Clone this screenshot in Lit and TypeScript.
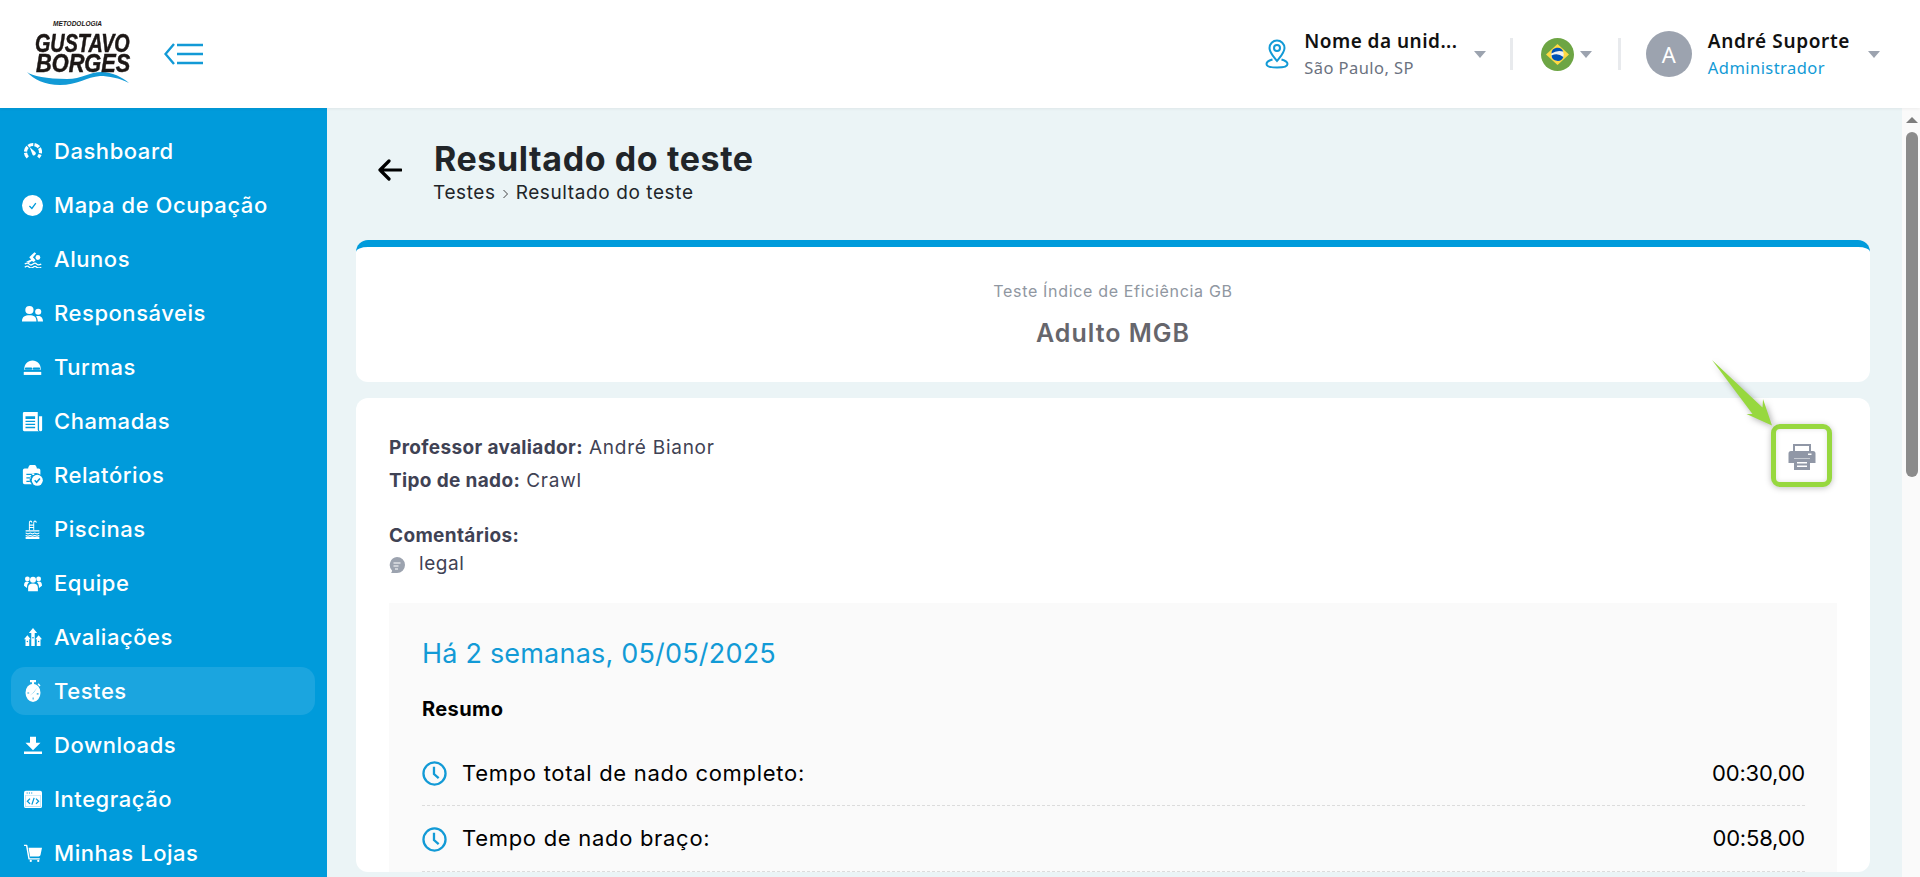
import { LitElement, html, css, svg } from "lit";
import { customElement } from "lit/decorators.js";

const B = "#009bdb";
const menu: [string, unknown, string][] = [
  ["Dashboard", svg`<path d="M5 20.500A10 10 0 1 1 19 20.500" fill="none" stroke="#fff" stroke-width="4.200" stroke-dasharray="6.800 1.500"/><path d="M7.500 6.500l7.800 7.200a2.600 2.600 0 0 1-3.800 3.500z"/>`, "sm"],
  ["Mapa de Ocupação", svg`<circle cx="12" cy="12" r="12"/><path d="M8.500 12.500l2.800 2.800 4.500-6" fill="none" stroke="${B}" stroke-width="1.500"/>`, ""],
  ["Alunos", svg`<circle cx="18.500" cy="10" r="3.200"/><path d="M3 15.500l6.500-3-2.500-3 7-6.500 2.200 1.800-4.300 4.700 3.600 4-2.500 2.500-2.500-1.300-4 2.500z"/><path d="M1 18.800c2.800-2 4.500-2 6 0 1.500 1.700 3 1.700 5 0 2-1.700 3.500-1.700 5 0 1.500 1.700 3.200 1.200 6 0M1 23c2.800-2 4.500-2 6 0 1.500 1.400 3 1.400 5 0 2-1.700 3.500-1.700 5 0 1.500 1.400 3.200 1 6 0" fill="none" stroke="#fff" stroke-width="1.700"/>`, "sm"],
  ["Responsáveis", svg`<circle cx="8.500" cy="8" r="4.700"/><circle cx="18.500" cy="10" r="3.500"/><path d="M0 21c0-5.500 3.500-7 8.500-7s8 1.500 8 7zM18 21c0-2.500-.6-4.300-2-5.700 4-1.500 8 .5 8 5.700z"/>`, ""],
  ["Turmas", svg`<path d="M2.500 14.500C2.500 8 6.500 4 12 4s9.500 4 9.500 10.500z"/><path d="M2 17h20v3.500H2z"/><path d="M4.500 13.300h6M13.500 13.300h6" stroke="${B}" stroke-width="2.600" stroke-linecap="round"/>`, ""],
  ["Chamadas", svg`<path fill-rule="evenodd" d="M1 2.500A1.500 1.500 0 0 1 2.500 1H18v20.500a1.500 1.500 0 0 0 1.500 1.500h-17A1.500 1.500 0 0 1 1 21.500zM4 6v3h11V6zm0 5v1.600h11V11zm0 3.500v1.600h11v-1.600zm0 3.500v1.600h11V18z"/><path d="M19.500 6H23v15.500a1.700 1.700 0 0 1-3.500 0z"/>`, ""],
  ["Relatórios", svg`<path fill-rule="evenodd" d="M3 4h4a5 5 0 0 1 10 0h2a2 2 0 0 1 2 2v5a7 7 0 0 0-9.800 11H3a2 2 0 0 1-2-2V6a2 2 0 0 1 2-2zm2 6v1.500h9V10zm0 4v1.500h5V14zm0 4v1.500h4V18z"/><circle cx="17.500" cy="17.500" r="6.300"/><path d="M14.500 17.500l2.200 2.200 3.800-4.200" fill="none" stroke="${B}" stroke-width="1.800"/>`, ""],
  ["Piscinas", svg`<path d="M7 13V3.500a2 2 0 0 1 4 0M14 13V3.500a2 2 0 0 1 4 0M7 6.500h7M7 9.500h7" fill="none" stroke="#fff" stroke-width="1.500"/><path d="M1 13h22v1.500H1zM1 21h22v3H1z"/><path d="M1 16.500c2 0 2 1 3.700 1s1.800-1 3.700-1 1.800 1 3.600 1 1.800-1 3.600-1 1.800 1 3.700 1 1.700-1 3.700-1M1 19.500c2 0 2 1 3.700 1s1.800-1 3.700-1 1.800 1 3.600 1 1.800-1 3.600-1 1.800 1 3.700 1 1.700-1 3.700-1" fill="none" stroke="#fff" stroke-width="1.400"/>`, "pool"],
  ["Equipe", svg`<circle cx="12" cy="7.500" r="4"/><circle cx="4.500" cy="6.500" r="3.200"/><circle cx="19.500" cy="6.500" r="3.200"/><path d="M5.500 23v-5c0-4 2.500-5.500 6.500-5.500s6.500 1.500 6.500 5.500v5zM0 15.500c0-3.500 1.500-5.500 4-5.500 1.200 0 2 .3 2.700 1C5 12.500 4 14.500 4 18.500zM24 15.500c0-3.500-1.500-5.500-4-5.500-1.200 0-2 .3-2.700 1 1.700 1.500 2.700 3.500 2.700 7.500z"/>`, "sm"],
  ["Avaliações", svg`<path d="M12 0l5.500 6.500h-3.200V24H9.700V6.500H6.500z"/><path d="M4.500 9.500L9 15H7v9H2v-9H0zM19.500 9.500L24 15h-2v9h-5v-9h-2z"/><circle cx="12" cy="13" r="1.100" fill="${B}"/><circle cx="4.500" cy="18" r="1" fill="${B}"/><circle cx="19.500" cy="18" r="1" fill="${B}"/>`, "sm"],
  ["Testes", svg`<path d="M8 0h8v2.400h-2.600v2.600h-2.800V2.400H8z"/><path fill-rule="evenodd" d="M12 4a10 10 0 1 1 0 20 10 10 0 0 1 0-20zm6 3.800l-5.500 5.700-5 3.700 5.600-3.500zM4.500 13.500v1.300h2.400v-1.300zm12.500 1v1.300h2.400v-1.300zm-5.500 4.500v2.200h1.300V19z"/><path d="M19.500 3.500l2.500 2.400-1.300 1.300-2.500-2.400z"/>`, "tall"],
  ["Downloads", svg`<path d="M8 1h8v8h6L12 19 2 9h6zM0 20.500h24V24H0z"/>`, "sm"],
  ["Integração", svg`<path fill-rule="evenodd" d="M2.500 1h19A2.500 2.500 0 0 1 24 3.500v18a2.500 2.500 0 0 1-2.500 2.500h-19A2.500 2.500 0 0 1 0 21.500v-18A2.500 2.500 0 0 1 2.500 1zM1.800 7v15.200h20.400V7zM3.500 3.300v1.500H5V3.300zm3 0v1.500H8V3.300zm3 0v1.500H11V3.300z"/><path d="M1.800 7h20.400v15.200H1.800z"/><path d="M8 11.500l-3.500 3.500 3.500 3.500M16 11.500l3.500 3.500-3.500 3.500M13.500 10.500l-3 9" fill="none" stroke="${B}" stroke-width="1.700"/>`, "sm"],
  ["Minhas Lojas", svg`<path d="M0 1h3.500a1 1 0 0 1 1 .8L7.600 19H21v1.800H6.800a1 1 0 0 1-1-.8L2.700 2.800H0z"/><path d="M6 5h18l-2 9.500a2.500 2.500 0 0 1-2.400 2H8z"/><circle cx="9" cy="22.500" r="1.500"/><circle cx="19" cy="22.500" r="1.500"/>`, "sm"],
];

const clock = html`<svg class="clock" viewBox="0 0 24 24"><circle cx="12" cy="12" r="10.600" fill="none" stroke="#129ad6" stroke-width="2.200"/><path d="M11.500 5.500v7l4.500 4" fill="none" stroke="#129ad6" stroke-width="2.200"/></svg>`;

@customElement("app-root")
export class AppRoot extends LitElement {
  static styles = css`
    :host { display: flex; flex-direction: column; height: 877px; overflow: hidden; font-family: "Inter", "Liberation Sans", sans-serif; background: #fff; }
    .top { flex: none; height: 108px; display: flex; align-items: center; background: #fff; position: relative; z-index: 2; box-shadow: 0 1px 3px rgba(0,0,0,.06); }
    .logo { width: 106px; height: 70px; margin: 0 0 0 27px; position: relative; font-family: "Liberation Sans", sans-serif; font-weight: 700; font-style: italic; color: #1c1715; white-space: nowrap; }
    .meto { font-size: 6.500px; line-height: 8px; padding-left: 26px; margin-top: 1px; }
    .lg { font-size: 25px; line-height: 19px; height: 19px; transform-origin: 0 50%; -webkit-text-stroke: .5px #1c1715; width: 106px; }
    .l1 { transform: scaleX(.79); margin: 5.500px 0 0 8px; }
    .l2 { transform: scaleX(.87); margin: 1px 0 0 9px; }
    .wave { position: absolute; left: 0; top: 0; width: 106px; height: 70px; }
    .burger { width: 39px; height: 22px; margin-left: 31px; }
    .spacer { flex: 1; }
    .top-text { font-family: "Noto Sans", sans-serif; display: flex; flex-direction: column; gap: 7px; }
    .t1 { font-size: 19px; font-weight: 600; line-height: 20px; color: #111; letter-spacing: .47px; }
    .t1.u { letter-spacing: .63px; }
    .t2 { font-size: 16.500px; line-height: 20px; color: #6b7280; letter-spacing: .45px; }
    .t2.blue { color: #129ad6; }
    .pin { width: 24px; height: 30px; margin-right: 15px; }
    .caret { width: 0; height: 0; border-left: 6.500px solid transparent; border-right: 6.500px solid transparent; border-top: 7px solid #9ca3af; }
    .c1 { margin-left: 16px; }
    .vr { width: 3px; height: 32px; background: #e8eaed; }
    .v1 { margin: 0 28px 0 24px; }
    .flag { width: 33px; height: 33px; margin-top: 1px; }
    .c2 { margin-left: 6px; }
    .v2 { margin: 0 25.300px 0 26px; }
    .avatar { width: 46px; height: 46px; border-radius: 50%; background: #9ca3af; color: #fff; display: flex; align-items: center; justify-content: center; font-size: 22px; font-family: "Noto Sans", sans-serif; margin-right: 16px; }
    .c3 { margin: 0 40px 0 18px; }

    .body { flex: 1; display: flex; min-height: 0; }
    .side { flex: none; width: 327px; background: #009bdb; padding: 19px 12px 0 11px; box-sizing: border-box; overflow: hidden; display: flex; flex-direction: column; gap: 6px; }
    .item { flex: none; height: 48px; border-radius: 14px; display: flex; align-items: center; padding-left: 11px; color: #fff; font-size: 22px; letter-spacing: .55px; font-weight: 500; }
    .item.on { background: #1ba5df; }
    .slot { width: 21px; margin-right: 11px; flex: none; display: flex; justify-content: center; }
    .slot svg { width: 21px; height: 21px; fill: #fff; }
    .slot svg.sm { width: 18px; height: 18px; }
    .slot svg.tall { width: 18px; height: 22px; }
    .slot svg.pool { width: 15px; height: 19px; }

    .main { flex: 1; min-width: 0; background: #ebf4f6; padding: 0 32px 0 29px; overflow: hidden; position: relative; }
    .head { height: 132px; display: flex; align-items: flex-start; box-sizing: border-box; padding-top: 31px; }
    .back { width: 24px; height: 22px; margin: 20px 32px 0 22px; flex: none; }
    .title { font-size: 34px; line-height: 40px; font-weight: 700; color: #212529; letter-spacing: .6px; }
    .crumbs { display: flex; align-items: center; font-size: 19px; line-height: 24px; color: #212529; letter-spacing: .6px; margin: 2px 0 0 -1px; }
    .crumbs svg { width: 8px; height: 10px; margin: 1px 6px 0 6px; }
    .card { background: #fff; border-radius: 12px; }
    .c-top { height: 142px; border-top: 7px solid #009bdb; box-sizing: border-box; text-align: center; padding-top: 34px; }
    .sub { font-size: 16px; line-height: 20px; color: #9097a1; letter-spacing: .67px; }
    .big { font-size: 25px; line-height: 30px; font-weight: 600; color: #66666c; margin-top: 17px; letter-spacing: 1px; }
    .c-main { margin-top: 16px; padding: 33px 33px 0 33px; position: relative; }
    .ln { font-size: 19px; line-height: 33px; color: #3f4254; letter-spacing: .75px; }
    .ln b { font-weight: 700; letter-spacing: .35px; }
    .cm { margin-top: 22px; font-size: 19px; line-height: 33px; font-weight: 700; color: #3f4254; letter-spacing: .35px; }
    .cmt { display: flex; align-items: center; font-size: 19px; line-height: 24px; color: #3f4254; letter-spacing: .57px; }
    .cmt svg { width: 16px; height: 17px; margin: 3px 14px 0 0; }
    .box { margin-top: 27px; background: #fafafa; padding: 31px 32px 0 33px; }
    .date { font-size: 27px; line-height: 40px; color: #129ad6; letter-spacing: .2px; }
    .res { font-size: 20px; line-height: 24px; font-weight: 700; color: #000; margin-top: 23px; letter-spacing: .4px; }
    .rows { margin-top: 19.500px; }
    .row { height: 65.500px; box-sizing: border-box; display: flex; align-items: center; border-bottom: 1px dashed #dcdcdc; font-size: 22px; color: #000; letter-spacing: .7px; }
    .clock { width: 25px; height: 25px; margin: 2px 15px 0 0; flex: none; }
    .row span:last-child { margin-left: auto; letter-spacing: -.2px; }

    .print { position: absolute; top: 26px; right: 38px; width: 61px; height: 63px; box-sizing: border-box; border: 5px solid #97d83f; border-radius: 9px; display: flex; align-items: center; justify-content: center; box-shadow: 0 1px 6px rgba(0,0,0,.25), inset 0 0 5px rgba(0,0,0,.12); background: #fff; }
    .print svg { width: 28px; height: 28px; }
    .arrow { position: absolute; top: 253px; left: 1386px; width: 60px; height: 66px; filter: drop-shadow(2px 2px 3px rgba(0,0,0,.3)); overflow: visible; }

    .sb { flex: none; width: 18px; background: #fafafa; display: flex; flex-direction: column; align-items: center; }
    .up { margin: 9px 0 0 2px; width: 0; height: 0; border-left: 6px solid transparent; border-right: 6px solid transparent; border-bottom: 6px solid #7d7d7d; }
    .thumb { width: 12px; height: 345px; margin: 9px 0 0 2px; background: #8b8b8b; border-radius: 6px; }
  `;

  render() {
    return html`
      <div class="top">
        <div class="logo">
          <svg class="wave" viewBox="0 0 106 70"><path d="M0 53C5 57 20 60 40 60 55 60 62 53 75 53 85 53 95 58 102 64 92 59 82 57 73 57 60 58 50 66 33 66 18 66 6 60 0 53z" fill="#129ad6"/></svg>
          <div class="meto">METODOLOGIA</div>
          <div class="lg l1">GUSTAVO</div>
          <div class="lg l2">BORGES</div>
        </div>
        <svg class="burger" viewBox="0 0 39 22"><path d="M10 1L1.500 11 10 21M13 2h26M13 11h26M13 20h26" fill="none" stroke="#129ad6" stroke-width="2.400"/></svg>
        <div class="spacer"></div>
        <svg class="pin" viewBox="0 0 24 30" fill="none" stroke="#129ad6" stroke-width="2"><path d="M12 22C8 17 4.500 13.500 4.500 9a7.500 7.500 0 0 1 15 0c0 4.500-3.500 8-7.500 13z"/><circle cx="12" cy="9" r="3"/><path d="M7.500 20.500C4 21.500 1.500 23 1.500 25c0 2.500 5 3.500 10.500 3.500S22.500 27.500 22.500 25c0-2-2.500-3.500-6-4.500"/></svg>
        <div class="top-text"><div class="t1">Nome da unid...</div><div class="t2">São Paulo, SP</div></div>
        <div class="caret c1"></div>
        <div class="vr v1"></div>
        <svg class="flag" viewBox="0 0 33 33"><circle cx="16.500" cy="16.500" r="16.500" fill="#6da544"/><path d="M16.500 6L28 16.500 16.500 27 5 16.500z" fill="#ffda44"/><circle cx="16.500" cy="16.500" r="6.200" fill="#f0f0f0"/><path d="M10.400 15.500a6.200 6.200 0 0 1 11.900-2 14 14 0 0 0-11.900 2zM10.500 17.500a11.500 11.500 0 0 1 11.900 1.500 6.200 6.200 0 0 1-11.900-1.500z" fill="#0052b4"/></svg>
        <div class="caret c2"></div>
        <div class="vr v2"></div>
        <div class="avatar">A</div>
        <div class="top-text"><div class="t1 u">André Suporte</div><div class="t2 blue">Administrador</div></div>
        <div class="caret c3"></div>
      </div>
      <div class="body">
        <nav class="side">
          ${menu.map(([n, ic, cls]) => html`<div class="item ${n === "Testes" ? "on" : ""}"><span class="slot"><svg class="${cls}" viewBox="0 0 24 24" preserveAspectRatio="none">${ic}</svg></span>${n}</div>`)}
        </nav>
        <main class="main">
          <div class="head">
            <svg class="back" viewBox="0 0 24 22"><path d="M11 2L2 11l9 9M2 11h21" fill="none" stroke="#000" stroke-width="3.200" stroke-linecap="round" stroke-linejoin="round"/></svg>
            <div>
              <div class="title">Resultado do teste</div>
              <div class="crumbs">Testes<svg viewBox="0 0 8 10"><path d="M1.500 1l4 4-4 4" fill="none" stroke="#444" stroke-width="1"/></svg>Resultado do teste</div>
            </div>
          </div>
          <section class="card c-top">
            <div class="sub">Teste Índice de Eficiência GB</div>
            <div class="big">Adulto MGB</div>
          </section>
          <section class="card c-main">
            <div class="ln"><b>Professor avaliador:</b> André Bianor</div>
            <div class="ln"><b>Tipo de nado:</b> Crawl</div>
            <div class="cm">Comentários:</div>
            <div class="cmt"><svg viewBox="0 0 16 17"><path d="M8 0a8 8 0 1 1 0 16H2a3 3 0 0 0 1-2.500A8 8 0 0 1 8 0z" fill="#9ca3af"/><path d="M4.500 6h7M4.500 9h5M6 12h3" stroke="#fff" stroke-width="1.200"/></svg>legal</div>
            <div class="print"><svg viewBox="0 0 28 28" fill="#9097a6"><path d="M5 2h18v8h-2V4H7v6H5z"/><path d="M3 9h22a2.500 2.500 0 0 1 2.500 2.500V21H22v-5H6v5H.500v-9.500A2.500 2.500 0 0 1 3 9z"/><path d="M20 11.500h3.500v1.500H20z" fill="#fff"/><path fill-rule="evenodd" d="M6 16.500h16V28H6zm3 3.500v1.500h10V20zm0 3.500V25h10v-1.500z"/></svg></div>
            <div class="box">
              <div class="date">Há 2 semanas, 05/05/2025</div>
              <div class="res">Resumo</div>
              <div class="rows">
                <div class="row">${clock}<span>Tempo total de nado completo:</span><span>00:30,00</span></div>
                <div class="row">${clock}<span>Tempo de nado braço:</span><span>00:58,00</span></div>
              </div>
            </div>
          </section>
          <svg class="arrow" viewBox="0 0 60 66"><path d="M-1-1L39.500 53 33.500 53 59 64.500 50 38 49.500 46.500z" fill="#97d83f"/></svg>
        </main>
        <div class="sb"><div class="up"></div><div class="thumb"></div></div>
      </div>
    `;
  }
}
